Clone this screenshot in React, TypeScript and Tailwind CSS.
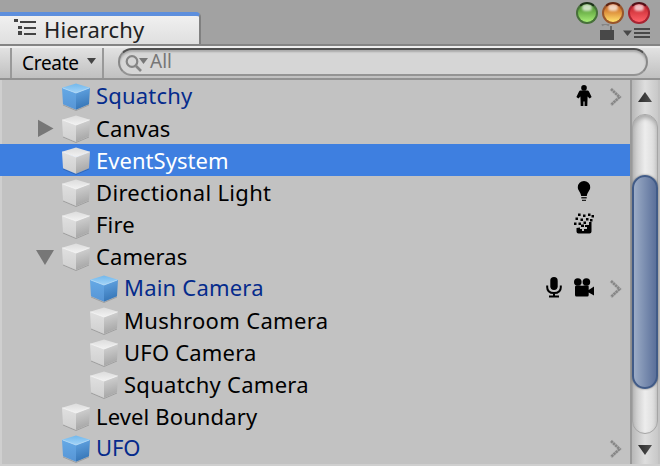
import React from "react";

type Badge = "person" | "bulb" | "particles" | "mic" | "camera";

interface Item {
  label: string;
  prefab?: boolean;
  child?: boolean;
  fold?: "open" | "closed";
  selected?: boolean;
  badges?: Badge[];
  arrow?: boolean;
  tracking: string;
}

const items: Item[] = [
  { label: "Squatchy", prefab: true, badges: ["person"], arrow: true, tracking: "tracking-[0.2px]" },
  { label: "Canvas", fold: "closed", tracking: "tracking-[0.1px]" },
  { label: "EventSystem", selected: true, tracking: "tracking-[0.05px]" },
  { label: "Directional Light", badges: ["bulb"], tracking: "tracking-[0.32px]" },
  { label: "Fire", badges: ["particles"], tracking: "tracking-[0.2px]" },
  { label: "Cameras", fold: "open", tracking: "tracking-[0.1px]" },
  { label: "Main Camera", prefab: true, child: true, badges: ["mic", "camera"], arrow: true, tracking: "tracking-[0.2px]" },
  { label: "Mushroom Camera", child: true, tracking: "tracking-[0.33px]" },
  { label: "UFO Camera", child: true, tracking: "tracking-[0.2px]" },
  { label: "Squatchy Camera", child: true, tracking: "tracking-[0.27px]" },
  { label: "Level Boundary", tracking: "tracking-[0.13px]" },
  { label: "UFO", prefab: true, arrow: true, tracking: "tracking-[-0.1px]" },
];

function Gradients() {
  return (
    <svg className="absolute size-0">
      <defs>
        <linearGradient id="bt" x1="0" y1="0" x2="0" y2="1"><stop stopColor="#72b8ec" /><stop offset="1" stopColor="#a4d4f8" /></linearGradient>
        <linearGradient id="bl" x1="0" y1="0" x2="0" y2="1"><stop stopColor="#65a9e6" /><stop offset="1" stopColor="#5795d5" /></linearGradient>
        <linearGradient id="br" x1="0.3" y1="0" x2="0.5" y2="1"><stop stopColor="#62a4e2" /><stop offset="1" stopColor="#3473b4" /></linearGradient>
        <linearGradient id="gt" x1="0" y1="0" x2="0" y2="1"><stop stopColor="#dcdcdc" /><stop offset="1" stopColor="#f2f2f2" /></linearGradient>
        <linearGradient id="gl" x1="0" y1="0" x2="0" y2="1"><stop stopColor="#e0e0e0" /><stop offset="1" stopColor="#d0d0d0" /></linearGradient>
        <linearGradient id="gr" x1="0.3" y1="0" x2="0.5" y2="1"><stop stopColor="#d4d4d4" /><stop offset="1" stopColor="#a4a4a4" /></linearGradient>
        <linearGradient id="ga" x1="0" y1="0" x2="1" y2="0"><stop stopColor="#2c2c2c" /><stop offset="1" stopColor="#505050" /></linearGradient>
      </defs>
    </svg>
  );
}

function Cube({ blue }: { blue?: boolean }) {
  return (
    <svg width="28" height="28" viewBox="0 0 28 28" className="mt-[2px] shrink-0">
      <path d="M1 22 14 27.5 27 22" fill="none" stroke="#000" strokeOpacity=".18" />
      <path d="M0 4.7 14 10V26.7L1 21.2Z" fill={blue ? "url(#bl)" : "url(#gl)"} />
      <path d="M28 4.7 14 10V26.7L27 21.2Z" fill={blue ? "url(#br)" : "url(#gr)"} />
      <path d="M0 4.7 14 .5 28 4.7 14 10Z" fill={blue ? "url(#bt)" : "url(#gt)"} />
      <path d="M.5 4.9 14 10 27.5 4.9" fill="none" stroke={blue ? "#b4dcfa" : "#f6f6f6"} strokeWidth=".8" />
    </svg>
  );
}

function BadgeIcon({ kind }: { kind: Badge }) {
  return (
    <svg width="22" height="24" viewBox="0 0 22 24" className="shrink-0">
      {kind === "person" && (
        <>
          <circle cx="11" cy="3.9" r="2.8" />
          <path d="M7.6 6.5h6.8q1.2 0 1.7 1.2l2.5 5.3-2 1.6-2-2-.3 9.4h-2.7v-4.6h-1.2v4.6H7.7l-.3-9.4-2 2-2-1.6 2.5-5.3q.5-1.2 1.7-1.2Z" />
        </>
      )}
      {kind === "bulb" && (
        <>
          <path d="M11 1a6.2 6.2 0 0 0-6.2 6.2c0 3.3 2.7 4.5 3.4 8.8h5.6c.7-4.3 3.4-5.5 3.4-8.8A6.2 6.2 0 0 0 11 1Z" />
          <path d="M8.3 17.7h5.4M9 20.4h4" stroke="#222" strokeWidth="1.4" />
        </>
      )}
      {kind === "particles" && (
        <>
          <path d="M3.5 16v3.5q0 2 2 2h11q2 0 2-2V10h-2.5v3h-4v2h2v2h-3v2h-2v-2h-2v-1.5Z" />
          <path d="M5 1.5h2.6v2.6H5zM10 2.5h2.5V5H10zM15 1.5h2.5V4H15zM18.5 3H21v2.5h-2.5zM2.5 5.5H5V8H2.5zM7.5 6.5H10V9H7.5zM13 6h2.5v2.5H13zM17 7h2.5v2.5H17zM1 10.5h2.5V13H1zM5.5 10.5H8V13H5.5zM10.5 9.5H13V12h-2.5zM8 12.5h3V15H8z" />
        </>
      )}
      {kind === "mic" && (
        <>
          <rect x="7.3" y="1" width="7.4" height="13" rx="3.7" />
          <path d="M4.2 9.5v1.8q0 5.8 6.8 5.8t6.8-5.8V9.5M11 17v3.5M6 20.5h10" fill="none" stroke="#000" strokeWidth="2" />
        </>
      )}
      {kind === "camera" && (
        <>
          <circle cx="4.8" cy="6" r="3.8" />
          <circle cx="13.4" cy="6" r="3.8" />
          <path d="M3.2 9.5h11.5q1 0 1 1V14l5.3-3.5v9l-5.3-3v2.5q0 1.5-1.4 1.5H3.5q-1.5 0-1.5-1.5v-8q0-1.5 1.2-1.5Z" />
          <path d="M7.8 9h2.6" stroke="#c2c2c2" />
        </>
      )}
    </svg>
  );
}

function Row({ item }: { item: Item }) {
  const color = item.selected ? "text-white" : item.prefab ? "pb-[2px] text-[#052b8c]" : "text-black";
  return (
    <div className={`flex h-8 shrink-0 items-center ${item.selected ? "bg-[#3e7fe0]" : ""}`}>
      <div className={`flex shrink-0 items-center ${item.child ? "w-[90px]" : "w-[62px]"} pl-9`}>
        {item.fold && (
          <svg width="18" height="18" viewBox="0 0 18 18" className="shrink-0">
            <path d={item.fold === "open" ? "M0 3h18L9 18Z" : "M2 .8v17.2L17.5 9.4Z"} fill="#777" />
          </svg>
        )}
      </div>
      <Cube blue={item.prefab} />
      <span className={`ml-1.5 flex-1 whitespace-nowrap text-[22px] leading-8 ${item.tracking} ${color}`}>{item.label}</span>
      <div className="flex gap-2">
        {item.badges?.map((b) => <BadgeIcon key={b} kind={b} />)}
      </div>
      <div className="flex w-[35px] shrink-0 pt-[2px] pl-[14px]">
        {item.arrow && (
          <svg width="14" height="20" viewBox="0 0 14 20">
            <path d="M2 2 10.5 10 2 18" fill="none" stroke="#bbb" strokeWidth="4" />
            <path d="M2 2 10.5 10 2 18" fill="none" stroke="#868686" strokeWidth="2.6" strokeDasharray="2.4 .5" />
          </svg>
        )}
      </div>
    </div>
  );
}

function Orb({ className }: { className: string }) {
  return (
    <span className={`relative size-[22px] overflow-hidden rounded-full border-2 ${className}`}>
      <span className="absolute top-0 left-[4px] h-[7px] w-[10px] rounded-full bg-white/70 blur-[1px]" />
    </span>
  );
}

export default function App() {
  return (
    <div className="flex h-[466px] w-[660px] flex-col overflow-hidden bg-[#c2c2c2] font-['Noto_Sans','Open_Sans',sans-serif]">
      <Gradients />
      <header className="flex h-[46px] shrink-0 justify-between border-b-2 border-[#848484] bg-[#a2a2a2]">
        <div className="mt-3 flex h-8 w-[201px] items-start rounded-tr-[5px] border-t-4 border-r-2 border-t-[#5d8fdd] border-r-[#808080] bg-linear-to-b from-[#f0f0f0] to-[#dfdfdf] pl-[14px]">
          <svg width="24" height="18" viewBox="0 0 24 18" fill="#444" className="mt-[3px]">
            <path d="M0 0h4v3H0zM6 2h16v2H6zM4 7h4v3H4zM10 8h12v2H10zM4 12h4v4H4zM10 14h12v2H10z" />
          </svg>
          <span className="-mt-px ml-[6px] text-[22px] leading-7 tracking-[0.1px] text-[#222]">Hierarchy</span>
        </div>
        <div className="flex w-[86px] flex-col pt-[2px]">
          <div className="flex gap-1 pl-[2px]">
            <Orb className="border-[#47703a] border-t-[#1e331a] bg-linear-to-b from-[#418527] to-[#a7ee76]" />
            <Orb className="border-[#98552b] border-t-[#5f2412] bg-linear-to-b from-[#bd4d12] to-[#ffe36d]" />
            <Orb className="border-[#a62432] border-t-[#541018] bg-linear-to-b from-[#bd1624] to-[#ff6169]" />
          </div>
          <svg width="86" height="18" viewBox="0 0 86 18" fill="#484848">
            <path d="M26 6h14v10H26zM49 6.5h9L53.5 12zM60 4h16v2H60zM60 8h16v2H60zM60 12h16v2H60z" />
            <path d="M28 1.5q3-3 7 0" fill="none" stroke="#858585" strokeWidth="2" />
            <path d="M36 2h2v4h-2z" fill="#666" />
          </svg>
        </div>
      </header>

      <div className="flex h-[34px] shrink-0 items-stretch border-t-2 border-b-2 border-t-[#eee] border-b-[#929292] bg-linear-to-b from-[#e2e2e2] to-[#c0c0c0]">
        <div className="flex w-[10px] shrink-0" />
        <div className="flex w-[94px] shrink-0 items-center border-x-2 border-[#999] pl-[10px]">
          <span className="text-[19px] leading-6 tracking-[-0.3px] text-black">Create</span>
          <svg width="10" height="7" viewBox="0 0 10 7" className="mb-[3px] ml-2"><path d="M0 0h9L4.5 6Z" fill="#444" /></svg>
        </div>
        <div className="ml-[14px] flex h-7 w-[530px] items-center rounded-full border-2 border-t-[#505050] border-r-[#888] border-b-[#949494] border-l-[#888] bg-[#d6d6d6] pl-[5px] shadow-[inset_0_2px_2px_#aaa]">
          <svg width="24" height="19" viewBox="0 0 24 19">
            <circle cx="7" cy="8.5" r="5.3" fill="none" stroke="#858585" strokeWidth="2.2" />
            <path d="m11 13 5 5" stroke="#858585" strokeWidth="2.6" />
            <path d="M14 5h9l-4.5 6Z" fill="#777" />
          </svg>
          <span className="ml-[1px] pb-[3px] text-[19px] leading-6 text-[#777]">All</span>
        </div>
      </div>

      <div className="flex h-[386px] border-b-2 border-l-2 border-[#cfcfcf]">
        <div className="-ml-[2px] flex w-[630px] flex-col">
          {items.map((item) => <Row key={item.label} item={item} />)}
        </div>
        <div className="mr-[2px] flex w-7 flex-col border-l-2 border-[#999] bg-linear-to-r from-[#b8b8b8] via-[#dedede] to-[#c8c8c8]">
          <div className="flex h-[34px] shrink-0 items-center justify-center">
            <svg width="14" height="12" viewBox="0 0 14 12"><path d="M7 1 14 11H0Z" fill="url(#ga)" /></svg>
          </div>
          <div className="flex h-[320px] shrink-0 flex-col rounded-full border border-[#a5a5a5] bg-linear-to-r from-[#c2c2c2] via-[#ededed] to-[#d8d8d8] pt-[60px] shadow-[inset_0_3px_4px_#aaa]">
            <div className="-mx-px h-[214px] rounded-full border-2 border-[#415b87] bg-linear-to-r from-[#9cacc6] to-[#5b709a] shadow-[0_0_2px_#666]" />
          </div>
          <div className="flex h-[30px] shrink-0 items-center justify-center pt-[3px]">
            <svg width="14" height="11" viewBox="0 0 14 11"><path d="M0 0h14L7 10Z" fill="url(#ga)" /></svg>
          </div>
        </div>
      </div>
    </div>
  );
}
